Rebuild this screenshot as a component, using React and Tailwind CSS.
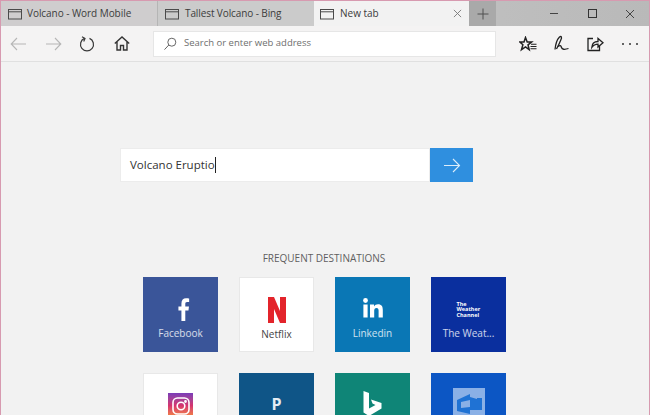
import React from "react";

const TabIcon = () => (
  <svg width="14" height="12" viewBox="0 0 14 12" fill="none" stroke="#4a4a4a" strokeWidth="1" className="shrink-0">
    <rect x="0.5" y="1.5" width="13" height="9.5" />
    <path d="M0.5 3.8H13.5" />
  </svg>
);

const Tile = ({ bg, label, labelColor = "text-white/80", children, border = "" }) => (
  <div className={`w-[75px] h-[75px] shrink-0 flex flex-col items-center ${bg} ${border}`}>
    <div className="h-[48px] w-full flex items-end justify-center">{children}</div>
    {label && <div className={`mt-[1px] text-[10px] leading-[14px] ${labelColor}`}>{label}</div>}
  </div>
);

export default function App() {
  return (
    <div className="w-[650px] h-[415px] overflow-hidden flex flex-col bg-[#f2f2f2] border-x border-t border-[#d79ab0] font-['Open_Sans','Noto_Sans',sans-serif]">
      {/* Tab strip */}
      <div className="h-[25px] shrink-0 flex bg-gradient-to-r from-[#c9c9c9] via-[#c4c4c4] to-[#b9b9b9] text-[#3c3c3c]">
        <div className="w-[157px] flex items-center gap-[5px] pl-[7px] bg-[#cfcdce] border-r border-[#b5b5b5] text-[10px] tracking-[-0.05px]">
          <TabIcon />
          <span>Volcano - Word Mobile</span>
        </div>
        <div className="w-[156px] flex items-center gap-[6px] pl-[7px] bg-[#cbcbcb] text-[10px] tracking-[-0.1px]">
          <TabIcon />
          <span>Tallest Volcano - Bing</span>
        </div>
        <div className="w-[155px] flex items-center pl-[6px] pr-[7px] bg-[#f2f2f2] text-[10px]">
          <TabIcon />
          <span className="ml-[6px]">New tab</span>
          <svg width="9" height="9" viewBox="0 0 10 10" stroke="#777" strokeWidth="1" className="ml-auto">
            <path d="M1 1L9 9M9 1L1 9" />
          </svg>
        </div>
        <div className="w-[27px] flex items-center justify-center bg-[#a9a9a9]">
          <svg width="12" height="12" viewBox="0 0 12 12" stroke="#505050" strokeWidth="1">
            <path d="M6 0.5V11.5M0.5 6H11.5" />
          </svg>
        </div>
        <div className="flex-1 flex items-center justify-end">
          <div className="w-[38px] flex justify-center">
            <div className="w-[8px] h-[1.5px] bg-[#444]" />
          </div>
          <div className="w-[38px] flex justify-center">
            <div className="w-[9px] h-[9px] border border-[#333]" />
          </div>
          <div className="w-[38px] flex justify-center">
            <svg width="10" height="10" viewBox="0 0 10 10" stroke="#444" strokeWidth="1">
              <path d="M1 1L9 9M9 1L1 9" />
            </svg>
          </div>
        </div>
      </div>

      {/* Toolbar */}
      <div className="h-[36px] shrink-0 flex items-center bg-[#f4f3f3] border-b border-[#e0e0e0]">
        <div className="w-[152px] shrink-0 flex items-center pl-[9px]">
          <svg width="17" height="14" viewBox="0 0 17 14" fill="none" stroke="#b6b6b6" strokeWidth="1.1">
            <path d="M16 7H1.2M7 1L1.2 7L7 13" />
          </svg>
          <svg width="17" height="14" viewBox="0 0 17 14" fill="none" stroke="#b6b6b6" strokeWidth="1.1" className="ml-[18px]">
            <path d="M1 7H15.8M10 1L15.8 7L10 13" />
          </svg>
          <svg width="16" height="16" viewBox="0 0 16 16" fill="none" stroke="#3a3a3a" strokeWidth="1.2" className="ml-[17px]">
            <path d="M5.5 2.4A6.5 6.5 0 1 0 10.5 2.4" />
            <path d="M3 0.8L6 2.4L4.7 5.4" />
          </svg>
          <svg width="16" height="15" viewBox="0 0 16 15" fill="none" stroke="#333" strokeWidth="1.4" className="ml-[19px]">
            <path d="M0.8 7.6L8 1L15.2 7.6M3 6V14H6.5V9.5H9.5V14H13V6" />
          </svg>
        </div>
        <div className="w-[343px] h-[26px] shrink-0 flex items-center bg-white border border-[#e6e6e6] pl-[9px] text-[9.5px] text-[#6e6e6e]">
          <svg width="14" height="14" viewBox="0 0 14 14" fill="none" stroke="#666" strokeWidth="1">
            <circle cx="8.8" cy="5.2" r="4" />
            <path d="M5.8 8L1.5 12.6" />
          </svg>
          <span className="ml-[7px]">Search or enter web address</span>
        </div>
        <div className="flex-1 flex items-center pl-[23px]">
          <svg width="18" height="16" viewBox="0 0 18 16" fill="none" stroke="#222" strokeWidth="1.5">
            <path d="M6.5 1.5L8.2 6H12.6L9 8.8L10.2 13.6L6.5 10.9L2.5 13.6L3.9 8.8L0.8 6H5Z" />
            <path d="M12 8.2H17.5M11.5 10.5H17.5M11.5 12.8H17.5" strokeWidth="1.1" />
          </svg>
          <svg width="17" height="17" viewBox="0 0 17 17" fill="none" stroke="#222" strokeWidth="1.3" className="ml-[16px]">
            <path d="M2 14.5C2.5 10 4 4.5 6.5 2C8.5 0.5 9 2.5 8 4.5C7 7 5.5 10.5 3.5 14" />
            <path d="M5 11.5C7 10 8 10.5 8.5 12.5C9 14.5 11.5 14.8 15.5 13.5" />
          </svg>
          <svg width="17" height="16" viewBox="0 0 17 16" fill="none" stroke="#222" strokeWidth="1.3" className="ml-[17px]">
            <path d="M6 2.5H1V14.5H12.5V10" />
            <path d="M4.8 11.5C5 7.5 7.5 5.5 11 5.5V2.5L16 6.8L11 11V8.2C8.5 8.2 6.5 9 4.8 11.5Z" />
          </svg>
          <div className="ml-[18px] flex gap-[5px]">
            <div className="w-[2px] h-[2px] rounded-full bg-[#333]" />
            <div className="w-[2px] h-[2px] rounded-full bg-[#333]" />
            <div className="w-[2px] h-[2px] rounded-full bg-[#333]" />
          </div>
        </div>
      </div>

      {/* Content */}
      <div className="flex-1 min-h-0 flex flex-col items-center">
        <div className="mt-[86px] w-[353px] h-[34px] shrink-0 flex self-start ml-[119px]">
          <div className="flex-1 flex items-center bg-white border border-[#ececec] pl-[9px] text-[11.5px] text-[#333]">
            <span>Volcano Eruptio</span>
            <div className="w-px h-[16px] bg-[#222]" />
          </div>
          <div className="w-[43px] flex items-center justify-center bg-[#2f8fdf]">
            <svg width="18" height="15" viewBox="0 0 18 15" fill="none" stroke="#dcedfa" strokeWidth="1.1">
              <path d="M1 7.5H16.5M10 1L16.5 7.5L10 14" />
            </svg>
          </div>
        </div>

        <div className="mt-[69px] h-[15px] ml-[-2px] text-[10px] leading-[15px] font-medium text-[#5f5f5f]">
          FREQUENT DESTINATIONS
        </div>

        <div className="mt-[11px] ml-[-1px] grid grid-cols-[repeat(4,75px)] gap-[21px]">
          <Tile bg="bg-[#3a5599]" label="Facebook">
            <svg width="12" height="23" viewBox="0 0 14 24" fill="#fff" preserveAspectRatio="none" className="mb-[4px] ml-[6px]">
              <path d="M4 24V13H0.5V8.8H4V5.8C4 2 6.2 0.2 9.3 0.2C11 0.2 12.5 0.4 13 0.5V4.2H10.6C8.9 4.2 8.5 5 8.5 6.2V8.8H12.8L12.2 13H8.5V24Z" />
            </svg>
          </Tile>
          <Tile bg="bg-white" label="Netflix" labelColor="text-[#444]" border="border border-[#e8e8e8]">
            <svg width="18" height="26" viewBox="0 0 18 26" className="mb-[3px]">
              <path d="M0 0H6L12 14V0H18V26H12L6 12V26H0Z" fill="#e3242b" />
            </svg>
          </Tile>
          <Tile bg="bg-[#0a77b5]" label="Linkedin">
            <svg width="20" height="20" viewBox="0 0 20 20" fill="#fff" className="mb-[7px]">
              <circle cx="2.5" cy="2.5" r="2.4" />
              <rect x="0.4" y="6.5" width="4.2" height="13" />
              <path d="M7 6.5H11V8.4C11.8 7 13.3 6.2 15 6.2C18.6 6.2 19.8 8.4 19.8 11.8V19.5H15.6V12.8C15.6 11.2 15.1 10 13.5 10C11.9 10 11.2 11.2 11.2 12.8V19.5H7Z" />
            </svg>
          </Tile>
          <Tile bg="bg-[#0a2f9e]" label="The Weat...">
            <div className="mb-[7px] w-[24px] text-[5.5px] leading-[5.5px] font-bold text-white">The Weather Channel</div>
          </Tile>

          <Tile bg="bg-white" border="border border-[#e8e8e8]">
            <div className="w-[25px] h-[25px] mb-[4px] flex items-center justify-center bg-gradient-to-b from-[#7a3bb8] via-[#d5326f] to-[#f58a2c]">
              <svg width="18" height="18" viewBox="0 0 18 18" fill="none" stroke="#fff" strokeWidth="1.6">
                <rect x="1" y="1" width="16" height="16" rx="4.5" />
                <circle cx="9" cy="9" r="3.8" />
                <circle cx="13.5" cy="4.5" r="0.6" fill="#fff" />
              </svg>
            </div>
          </Tile>
          <Tile bg="bg-[#0f5587]">
            <div className="mb-[7px] text-[16px] leading-[20px] font-bold text-[#e4edf4]">P</div>
          </Tile>
          <Tile bg="bg-[#0f8577]">
            <svg width="19" height="25" viewBox="0 0 18 25" fill="#fff" className="mb-[5px]">
              <path d="M0 0L5.5 2V17.5L12 14L9 12.5L7.5 8.5L18 12V17.5L5.5 25L0 21.5Z" />
            </svg>
          </Tile>
          <Tile bg="bg-[#0c56c4]">
            <div className="w-[32px] h-[32px] mb-[1px] flex items-center justify-center bg-[#8ab0e6]">
              <svg width="28" height="28" viewBox="0 0 28 28" fill="none">
                <path d="M2 10L15 4V7L22 9V20L15 20V24L2 21Z" fill="#1f72d4" />
                <path d="M6 12L15 10V17L6 18Z" fill="#8ab0e6" />
                <path d="M22 8H27V20H22Z" fill="#1f72d4" />
              </svg>
            </div>
          </Tile>
        </div>
      </div>
    </div>
  );
}
